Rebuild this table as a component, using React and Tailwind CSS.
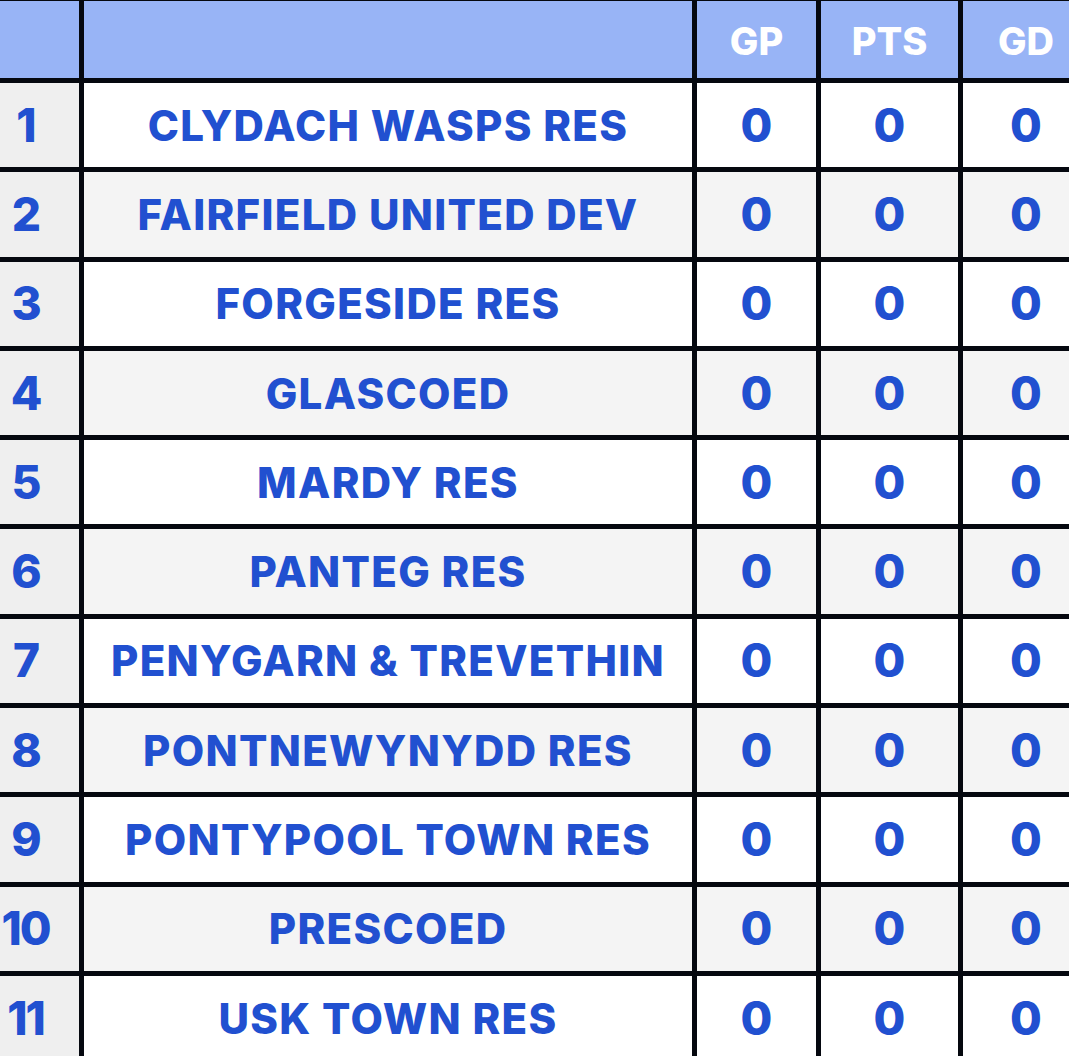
const teams = [
  "CLYDACH WASPS RES",
  "FAIRFIELD UNITED DEV",
  "FORGESIDE RES",
  "GLASCOED",
  "MARDY RES",
  "PANTEG RES",
  "PENYGARN & TREVETHIN",
  "PONTNEWYNYDD RES",
  "PONTYPOOL TOWN RES",
  "PRESCOED",
  "USK TOWN RES",
];

export default function App() {
  return (
    <div
      className="w-[1069px] h-[1056px] overflow-hidden bg-white"
      style={{ fontFamily: "Inter, 'Noto Sans', sans-serif" }}
    >
      <div className="w-[1120px] grid grid-cols-[79px_608px_119px_137px_126px] gap-x-[5px] gap-y-[5px] bg-[#05080f] pt-px">
        {/* header */}
        <div className="h-[77px] bg-[#98b4f6]" />
        <div className="h-[77px] bg-[#98b4f6]" />
        {["GP", "PTS", "GD"].map((h) => (
          <div
            key={h}
            className="h-[77px] pt-[3px] bg-[#98b4f6] flex items-center justify-center text-white font-extrabold text-[38px]"
          >
            {h}
          </div>
        ))}

        {teams.map((name, i) => {
          const rowBg = i % 2 === 0 ? "bg-white" : "bg-[#f4f4f4]";
          return [
            <div
              key={name + "-pos"}
              className="h-[84.3px] bg-[#efefef] flex items-center text-[#2150d0] font-extrabold text-[46px]"
            >
              <span className="w-[51px] text-center tracking-[-2px]">{i + 1}</span>
            </div>,
            <div
              key={name}
              className={`h-[84.3px] ${rowBg} flex items-center justify-center text-[#2150d0] font-extrabold text-[42px] tracking-[1.3px] whitespace-nowrap`}
            >
              {name}
            </div>,
            ...["gp", "pts", "gd"].map((k) => (
              <div
                key={name + k}
                className={`h-[84.3px] ${rowBg} flex items-center justify-center text-[#2150d0] font-extrabold text-[46px]`}
              >
                0
              </div>
            )),
          ];
        })}
      </div>
    </div>
  );
}
